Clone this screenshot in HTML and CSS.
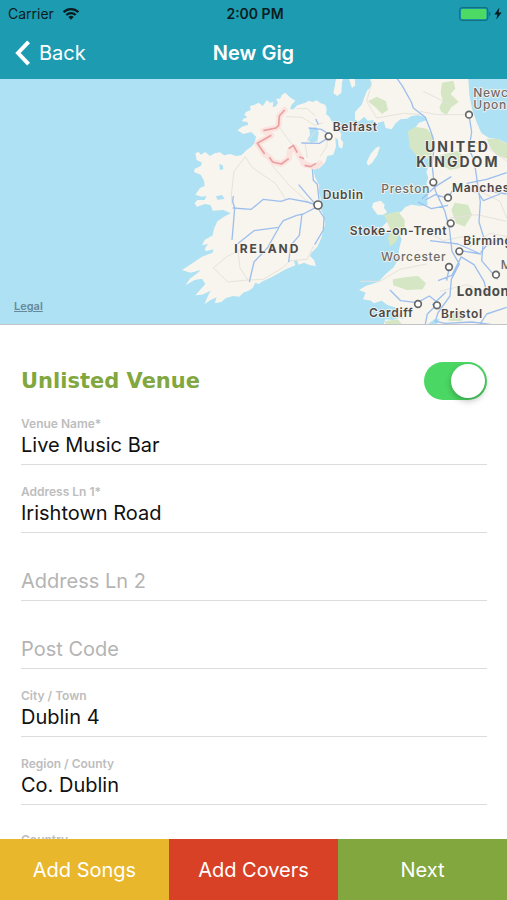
FILE: index.html
```html
<!DOCTYPE html>
<html lang="en">
<head>
  <meta charset="UTF-8">
  <meta name="viewport" content="width=device-width, initial-scale=1.0">
  <title>New Gig</title>
  <link rel="stylesheet" href="styles.css">
</head>
<body>
  <header class="header">
    <div class="status-bar">
      <div class="carrier">
        <span>Carrier</span>
        <svg class="wifi" viewBox="0 0 18 13" aria-hidden="true">
          <path d="M1.6 5.1a10.5 10.5 0 0 1 14.8 0M4.3 8a6.6 6.6 0 0 1 9.4 0" fill="none" stroke="currentColor" stroke-width="2.2"/>
          <path d="M9 12.8 6.3 10a3.8 3.8 0 0 1 5.4 0z" fill="currentColor"/>
        </svg>
      </div>
      <span class="time">2:00 PM</span>
      <div class="power">
        <svg class="battery" viewBox="0 0 32 14" aria-hidden="true">
          <rect x="0.7" y="0.7" width="28" height="12.6" rx="2.6" fill="none" stroke="#12707f" stroke-width="1.2"/>
          <rect x="2" y="2" width="25.4" height="10" rx="1.2" fill="#4cd964"/>
          <path d="M30 4.8a2.4 2.4 0 0 1 0 4.4z" fill="#12707f"/>
        </svg>
        <svg class="bolt" viewBox="0 0 8 13" aria-hidden="true">
          <path d="M5.4 0.6 0.4 7.4h2.9L2.4 12.4 7.6 5.5H4.6z" fill="currentColor"/>
        </svg>
      </div>
    </div>
    <nav class="nav-bar">
      <button type="button" class="back">
        <svg class="chevron" viewBox="0 0 16 26" aria-hidden="true">
          <path d="M13.6 1.8 3 13l10.6 11.2" fill="none" stroke="currentColor" stroke-width="4"/>
        </svg>
        Back
      </button>
      <h1 class="title">New Gig</h1>
    </nav>
  </header>

  <main class="content">
    <section class="map">
      <svg class="map-canvas" viewBox="0 0 1521 735" preserveAspectRatio="xMidYMid slice" role="img" aria-label="Map of Ireland and the United Kingdom">
        <!-- Ireland -->
        <g transform="translate(540 -3)">
          <path class="land" d="M172 157L186 146 205 140 202 132 186 130 190 122 202 118 193 110 198 102 212 96 210 84 224 80 236 74 248 84 254 76 260 66 270 74 280 72 278 88 288 84 294 74 288 62 300 62 306 50 316 44 330 58 346 68 334 82 330 94 340 94 352 82 376 74 386 68 398 72 410 67 422 76 436 80 440 94 438 108 448 116 455 130 468 138 474 152 484 168 482 182 490 194 486 212 476 206 474 186 466 178 468 206 460 230 442 234 436 252 428 262 416 272 404 266 400 276 406 300 418 322 416 340 422 360 420 390 428 404 436 438 430 456 424 480 412 506 394 524 390 534 402 546 408 564 390 562 372 554 356 560 350 546 342 550 346 562 320 572 296 586 270 600 248 610 236 618 226 614 218 630 206 638 190 644 178 656 160 654 138 660 124 672 104 676 110 658 92 666 74 678 82 658 92 638 66 650 46 652 62 634 76 618 66 602 44 606 16 622 30 602 56 582 62 576 32 584 6 576 28 562 66 536 98 524 100 514 78 520 74 512 84 498 66 502 74 486 98 472 102 452 112 430 132 416 152 406 130 396 98 398 92 382 76 378 50 386 44 376 52 366 74 366 80 354 64 356 46 350 60 330 74 324 72 308 62 290 42 282 44 272 62 264 66 254 50 246 46 226 56 222 62 230 76 222 90 234 104 226 120 223 132 232 150 228 168 234 184 232 200 216 214 206 224 194 228 176 214 162 204 164 190 168z"/>
          <path class="water" d="M388 150l22-2 6 16-4 26-18 4-12-10 8-12zM118 258l10 4 2 12-10 2zM108 355l18-4 8 12-22 2z"/>
          <path class="minor" d="M318 116l48 2 38 24 26-8M350 92l32 0 24 22M300 150l30 42 26 26M196 236l20 32 70 48 30 46M276 262l52 60 58 52M196 236l-34 44-8 70 2 30M420 236l20-30 2-28M174 520l6 50 24 36-60 6-44-42 40-34 40-20M206 606l44-2 60-36 20-20 52-4 18-40M406 160l-30 40 6 40"/>
          <path class="river" d="M364 195l54 1 28-17M386 150l38 4 22 14M407 123l8 16M397 272l3 35 12 12 5 46M356 320l22 26 24 28M160 354l-2 16 6 20-4 50-4 46M158 390l56 4 36-30 52 6 26-8 54 10 36 12M172 498l50-40 74-10 14-20 40-16 20-4 42-22M296 450l-34 60-40 42-14 60M366 408l-8 64-26 30-6 50M412 388l20 30-2 38-26 44"/>
          <path class="border-glow" d="M314 96l-16 18-2 28-8 8-38 8 24 14-42 24 22 32 14 10 10 14 26 6 22-16 4-24 14-10 12 22 16 28 14 4 18 4 16-10"/>
          <path class="border" d="M314 96l-16 18-2 28-8 8-38 8M274 172l-42 24 22 32M268 238l10 14 26 6 22-16M326 212l14-10 12 22M358 236l14 6M374 262l18 4 16-10"/>
        </g>

        <!-- Great Britain -->
        <g transform="translate(1020 -3)">
          <path class="land" d="M90 0l5 24-14 14-8 20-8 22-20 22 0 24 12 4 16-14 10 12 16-2 10 10 22-6 6 20 18 4 10-16 16-14 20-2 14-8 20-2 18 4 8 10-24 8-14 18-10 18-2 20 14 22 12 14 10 14 18-6 4 24-10 24 6 18-6 16 10 22-8 26 2 16-20 4-30-4-18 8-10 12-28 14-14 16-18 18-12 16 4 8 26-10 18-2 14 2 10 22-8 30-2 30-14 24-24 20-22 24-38 12-20 12 20 8-8 20 24 4 8 8 24-8 18 14 22 6 12 18 16 18 46 16 26-2 18-14 16 0-12 20-14 20-6 18H520V205l-40-20-34-6-22-14-14-32-14-40-8-44-4-60z"/>
          <path class="land" d="M-14 12l6-22h20l-6 24-2 30-12 10-12-8 4-20zM26 0l18-4 2 26-10 8zM120 205l-8 26-16 24-12 8-4-10 12-26 16-18zM96 388l4-14 22-6 12 12-2 10 10 12-12 8-18 0zM130 742l6-18 22 2 20-6 20 4 30-8 12 24z"/>
          <path class="wood" d="M306 14l34-6 6 24-14 16 24 24-22 16-14 22-16-8-6-14 10-20-6-24zM84 70l26-14 28 14 6 26-18 12-20-20zM204 160l22-14 34 6 20 20 2 40-14 30-34-2-26-34zM440 182l34 0 46 26v40l-50-16-20-24zM300 232l54-14 20 20-14 32-30 6-34-22zM132 410l42-10 20 26 0 24-16 16-10 26-18 14-6-24 6-30zM344 374l40 6 12 30-22 36-26-10-14-40zM158 604l36-6 40-4 24 22-10 18-48 2-40-14zM134 730l40-6 14 18h-50zM326 710l28-14 26 8-16 26-38-2z"/>
          <path class="minor" d="M96 10l-16 60 30 50 80-14 60 4M240 100l52 10 94 0M250 40l80 40M390 190l40 10 71 50M60 610l60 0 60-36 80-16M240 452l70 36 80-16M390 506l60-40 51 10M300 640l80-20 80 30 40-20M420 340l60 30 20 50M330 420l80-10 90 20"/>
          <path class="river" d="M170 0l16 22 28 50 6 18 36 28 16 40 12 40-8 60 6 54 4 26 28 60 14 52 8 70 22 38-24 46-4 50-36 50-8 26 30 6 80-4 60 8 32 12 30-10M387 112l8 50-8 50 16 38 8 56 10 66-4 60 14 46-6 70 48 56M246 362l40-36 48-30M256 366l30-16 40 12 10-24M380 316l60-12 60-20M380 316l20 26 40-4 60 10M410 338l20 30 50-20M234 372l40 20 50-10M270 488l84 10 68 30-60-10-10 0M362 536l40 24 30 50 10 38M422 524l16-20 48-24M294 608l42-16 28-56M150 636l32 32 50 6 36-20 20 16-10 10 40-38M290 680l-28 28-6 30M420 738l20-30 60-20M330 558l-10 50"/>
        </g>

        <g class="pins">
          <circle cx="986" cy="172" r="10"/>
          <circle cx="954" cy="378" r="12"/>
          <circle cx="1407" cy="107" r="10"/>
          <circle cx="1300" cy="310" r="10"/>
          <circle cx="1344" cy="356" r="10"/>
          <circle cx="1352" cy="433" r="10"/>
          <circle cx="1378" cy="517" r="10"/>
          <circle cx="1347" cy="564" r="10"/>
          <circle cx="1488" cy="587" r="10"/>
          <circle cx="1254" cy="675" r="10"/>
          <circle cx="1311" cy="679" r="10"/>
        </g>

        <g class="labels">
          <text class="country" x="703" y="523">IRELAND</text>
          <text class="country large" x="1275" y="218">UNITED</text>
          <text class="country large" x="1249" y="264">KINGDOM</text>
          <text x="998" y="156">Belfast</text>
          <text x="968" y="361">Dublin</text>
          <text class="town" x="1420" y="54">Newcastle</text>
          <text class="town" x="1420" y="91">Upon</text>
          <text class="town" x="1144" y="342">Preston</text>
          <text x="1356" y="339">Manchester</text>
          <text x="1049" y="469">Stoke-on-Trent</text>
          <text x="1390" y="499">Birmingham</text>
          <text class="town" x="1143" y="547">Worcester</text>
          <text class="town" x="1502" y="570">Milton</text>
          <text class="city" x="1370" y="651">London</text>
          <text x="1107" y="715">Cardiff</text>
          <text x="1323" y="717">Bristol</text>
        </g>
      </svg>
      <a class="legal" href="#legal">Legal</a>
    </section>

    <form class="venue-form">
      <div class="venue-toggle">
        <label for="unlisted">Unlisted Venue</label>
        <input type="checkbox" role="switch" class="switch" id="unlisted" checked>
      </div>

      <div class="field">
        <label for="venueName">Venue Name*</label>
        <input type="text" id="venueName" value="Live Music Bar">
      </div>
      <div class="field">
        <label for="address1">Address Ln 1*</label>
        <input type="text" id="address1" value="Irishtown Road">
      </div>
      <div class="field">
        <input type="text" id="address2" placeholder="Address Ln 2" aria-label="Address Ln 2">
      </div>
      <div class="field">
        <input type="text" id="postCode" placeholder="Post Code" aria-label="Post Code">
      </div>
      <div class="field">
        <label for="city">City / Town</label>
        <input type="text" id="city" value="Dublin 4">
      </div>
      <div class="field">
        <label for="region">Region / County</label>
        <input type="text" id="region" value="Co. Dublin">
      </div>
      <div class="field picker">
        <label for="country">Country</label>
        <input type="text" id="country">
      </div>
    </form>
  </main>

  <footer class="actions">
    <button type="button" class="songs">Add Songs</button>
    <button type="button" class="covers">Add Covers</button>
    <button type="button" class="next">Next</button>
  </footer>
</body>
</html>
```

FILE: styles.css
```css
:root {
  --teal: #1c9bb1;
  --green: #82a73f;
  --yellow: #e9b72b;
  --red: #d94127;
  --sea: #ade1f3;
  --land: #f8f5ee;
  --gray-200: #dcdcdc;
  --gray-400: #bdbdbd;
}

* {
  margin: 0;
  padding: 0;
  box-sizing: border-box;
}

body {
  font-family: Inter, "Helvetica Neue", "Liberation Sans", Arial, sans-serif;
  background-color: white;
  color: #111;
  height: 100vh;
  display: flex;
  flex-direction: column;
}

button {
  border: none;
  background: none;
  font-family: inherit;
  color: white;
  cursor: pointer;
}

/* Header */
.header {
  background-color: var(--teal);
  flex-shrink: 0;
}

.status-bar {
  display: grid;
  grid-template-columns: 1fr auto 1fr;
  align-items: center;
  height: 27px;
  padding: 0 5px 0 8px;
  font-size: 14px;
  color: #0b1c20;
}

.carrier,
.power {
  display: flex;
  align-items: center;
  gap: 8px;
}

.power {
  justify-content: flex-end;
  gap: 3px;
}

.time {
  font-weight: 600;
}

.wifi {
  width: 18px;
  height: 13px;
}

.battery {
  width: 32px;
  height: 14px;
}

.bolt {
  width: 8px;
  height: 13px;
}

.nav-bar {
  display: grid;
  grid-template-columns: 1fr auto 1fr;
  align-items: center;
  height: 52px;
  padding: 0 15px;
}

.back {
  display: flex;
  align-items: center;
  justify-self: start;
  gap: 8px;
  font-size: 20px;
}

.chevron {
  width: 16px;
  height: 26px;
}

.title {
  font-size: 20px;
  font-weight: 600;
  color: white;
}

/* Map */
.content {
  flex: 1;
  min-height: 0;
  overflow: hidden;
}

.map {
  position: relative;
  height: 246px;
  background-color: var(--sea);
  border-bottom: 1px solid #c4c4c8;
}

.map-canvas {
  display: block;
  width: 100%;
  height: 100%;
}

.land {
  fill: var(--land);
}

.water {
  fill: var(--sea);
}

.wood {
  fill: #d5e6c5;
}

.river,
.minor,
.border,
.border-glow {
  fill: none;
  stroke-linejoin: round;
}

.river {
  stroke: #9dbfee;
  stroke-width: 4;
}

.minor {
  stroke: #e6e2dc;
  stroke-width: 3;
}

.border {
  stroke: #eb9fa0;
  stroke-width: 5;
}

.border-glow {
  stroke: #fbe3df;
  stroke-width: 18;
  stroke-linecap: round;
}

.pins {
  fill: white;
  stroke: #666;
  stroke-width: 5;
}

.labels {
  font-size: 36px;
  font-weight: 600;
  letter-spacing: 2px;
  fill: #4a4a4a;
  stroke: var(--land);
  stroke-width: 5;
  paint-order: stroke;
}

.labels .town {
  font-weight: 500;
  fill: #6c6c6c;
}

.labels .city {
  font-size: 40px;
  font-weight: 700;
}

.labels .country {
  font-weight: 700;
  letter-spacing: 6px;
}

.labels .large {
  font-size: 42px;
}

.legal {
  position: absolute;
  left: 14px;
  bottom: 11px;
  font-size: 11px;
  font-weight: 600;
  color: #67899a;
}

/* Form */
.venue-form {
  padding: 36px 20px 0 21px;
}

.venue-toggle {
  display: flex;
  align-items: center;
  justify-content: space-between;
  height: 39px;
  margin-bottom: 14px;
}

.venue-toggle label {
  font-family: Verdana, "DejaVu Sans", sans-serif;
  font-size: 21px;
  font-weight: 700;
  color: var(--green);
}

.switch {
  appearance: none;
  width: 63px;
  height: 38px;
  padding: 2px;
  border-radius: 19px;
  background-color: #d8d8d8;
  display: flex;
  cursor: pointer;
}

.switch::before {
  content: "";
  width: 34px;
  height: 34px;
  border-radius: 50%;
  background-color: white;
  box-shadow: 0 3px 6px rgba(0, 0, 0, 0.25);
}

.switch:checked {
  background-color: #4bd763;
  justify-content: flex-end;
}

.field {
  display: flex;
  flex-direction: column;
  justify-content: flex-end;
  height: 68px;
  padding-bottom: 5px;
  border-bottom: 1px solid var(--gray-200);
}

.venue-toggle + .field {
  height: 51px;
}

.field label {
  font-size: 12px;
  line-height: 14px;
  font-weight: 600;
  color: var(--gray-400);
}

.field input {
  width: 100%;
  height: 28px;
  border: none;
  outline: none;
  background: none;
  font-family: inherit;
  font-size: 20px;
  color: #111;
}

.field input::placeholder {
  color: #b4b4b4;
}

.field.picker {
  justify-content: flex-start;
  padding-top: 28px;
}

/* Bottom actions */
.actions {
  display: grid;
  grid-template-columns: repeat(3, 1fr);
  height: 61px;
  flex-shrink: 0;
}

.actions button {
  font-size: 20px;
}

.songs {
  background-color: var(--yellow);
}

.covers {
  background-color: var(--red);
}

.next {
  background-color: var(--green);
}
```
